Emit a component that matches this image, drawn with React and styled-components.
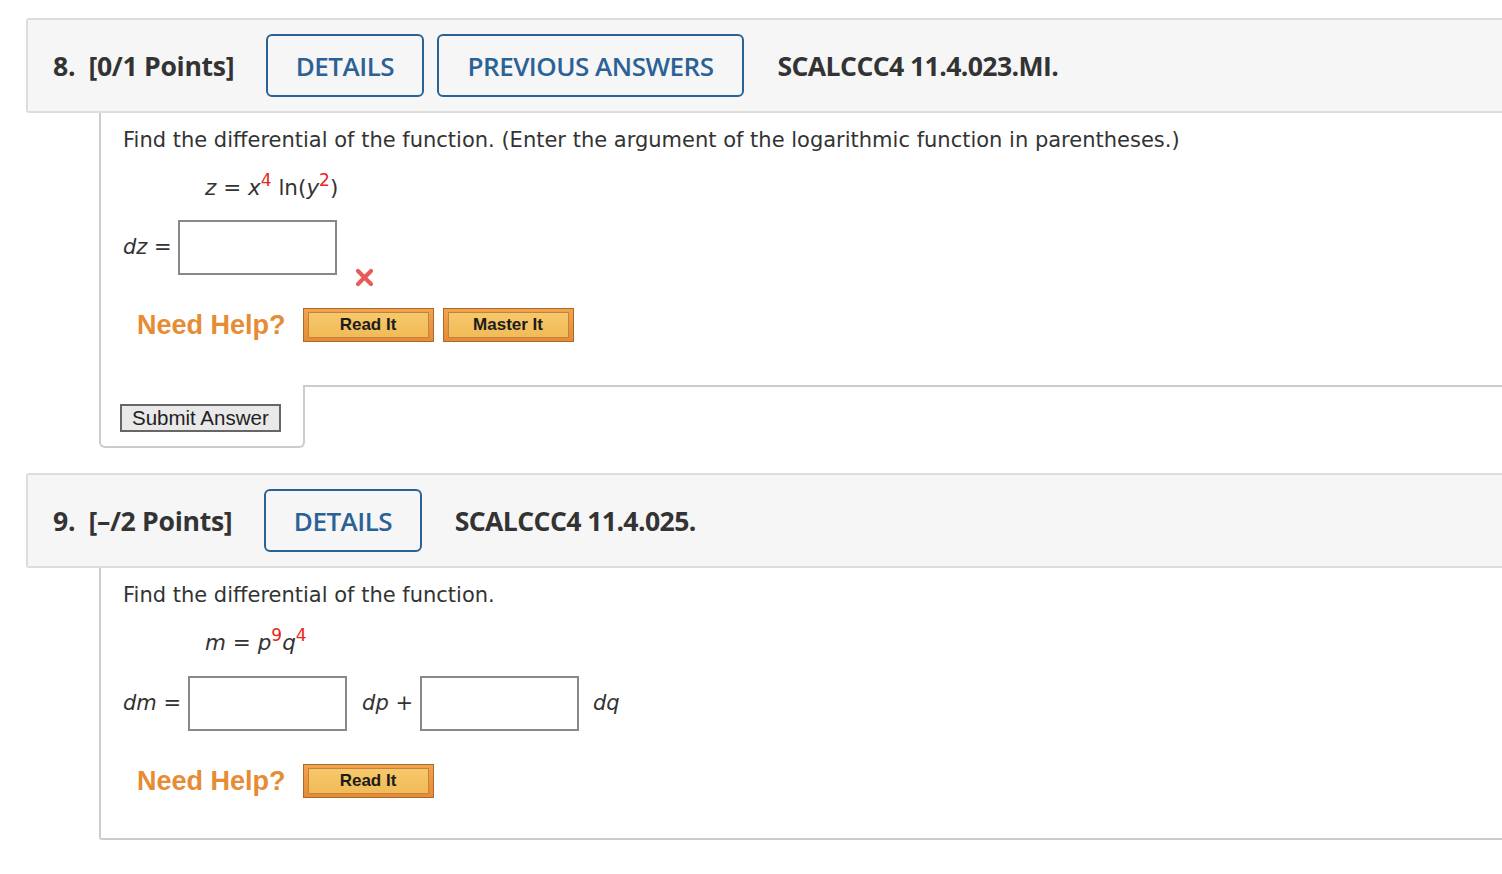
import React from "react";
import styled, { createGlobalStyle } from "styled-components";

const GlobalStyle = createGlobalStyle`
  html, body { margin: 0; padding: 0; background: #fff; overflow: hidden; }
  body { font-family: "DejaVu Sans", Verdana, sans-serif; color: #333; }
`;

const Page = styled.div`
  width: 1520px;
  padding: 18px 0 0 26px;
`;

const Question = styled.section`
  margin-bottom: 25px;
`;

const Header = styled.div`
  display: flex;
  align-items: center;
  height: 91px;
  background: #f6f6f6;
  border: 2px solid #dddddd;
  border-radius: 3px;
  padding-left: 25px;
  font-family: "Open Sans", sans-serif;
`;

const Title = styled.div`
  font-size: 26.6px;
  font-weight: 700;
  color: #333;
  letter-spacing: -0.3px;
  white-space: pre;
  margin-right: 32px;
`;

const ButtonGroup = styled.div`
  display: flex;
  gap: 13px;
  margin-right: 33px;
`;

const HeaderButton = styled.button`
  height: 63px;
  box-sizing: border-box;
  padding: 0 ${(p) => p.$pad || 27.5}px;
  border: 2px solid #2b6296;
  border-radius: 6px;
  background: transparent;
  color: #2b6296;
  font-family: "Open Sans", sans-serif;
  font-size: 26px;
  font-weight: 600;
  letter-spacing: -0.5px;
`;

const Ref = styled.div`
  font-size: 26.6px;
  font-weight: 700;
  color: #333;
  letter-spacing: -0.6px;
`;

const Body = styled.div`
  margin-left: 73px;
`;

const Content = styled.div`
  border-left: 2px solid #cccccc;
  padding: ${(p) => p.$top}px 0 ${(p) => p.$bottom || 0}px 22px;
  ${(p) => p.$closed && "border-bottom: 2px solid #cccccc; border-bottom-left-radius: 3px;"}
`;

const Prompt = styled.div`
  font-size: 21px;
  line-height: 24px;
  color: #333;
`;

const Equation = styled.div`
  margin: 24px 0 0 82px;
  font-size: 21.5px;
  line-height: 24px;
  color: #333;
`;

const Var = styled.i`
  font-style: italic;
`;

const Sup = styled.sup`
  color: #e8261c;
  font-size: 17px;
  vertical-align: 9px;
  line-height: 0;
`;

const AnswerRow = styled.div`
  display: flex;
  align-items: flex-start;
  height: 55px;
  margin-top: ${(p) => p.$top}px;
  font-size: 21px;
`;

const MathText = styled.span`
  line-height: 55px;
  white-space: pre;
  margin: 0 ${(p) => p.$right || 0}px 0 ${(p) => p.$left || 0}px;
`;

const AnswerBox = styled.div`
  width: 159px;
  height: 55px;
  box-sizing: border-box;
  border: 2px solid #888;
  background: #fff;
`;

const Wrong = styled.svg`
  flex: none;
  margin: 47px 0 0 17px;
`;

const HelpRow = styled.div`
  display: flex;
  align-items: center;
  margin-top: 33px;
  padding-left: 14px;
`;

const NeedHelp = styled.span`
  font-family: "Liberation Sans", Arial, sans-serif;
  font-weight: 700;
  font-size: 27px;
  color: #e58c34;
  margin-right: 17px;
`;

const HelpButton = styled.button`
  width: 131px;
  height: 34px;
  box-sizing: border-box;
  padding: 3px 4px;
  margin-right: 9px;
  border: 1px solid #a9692b;
  background: linear-gradient(#f2a34e, #e58c34);
  display: flex;
`;

const HelpInner = styled.span`
  flex: 1;
  display: flex;
  align-items: center;
  justify-content: center;
  border: 1px solid #c48240;
  background: linear-gradient(#f7c86a, #f1bb57);
  font-family: "Liberation Sans", Arial, sans-serif;
  font-weight: 700;
  font-size: 17px;
  color: #1c1c1c;
`;

const SubmitRow = styled.div`
  display: flex;
`;

const SubmitBox = styled.div`
  width: 206px;
  box-sizing: border-box;
  border: 2px solid #cccccc;
  border-top: none;
  border-radius: 0 0 6px 6px;
  padding: 19px 0 14px 19px;
`;

const Filler = styled.div`
  flex: 1;
  border-top: 2px solid #cccccc;
`;

const SubmitButton = styled.button`
  height: 28px;
  box-sizing: border-box;
  padding: 0 10px;
  border: 2px solid #666;
  background: #e9e9e9;
  font-family: "Liberation Sans", Arial, sans-serif;
  font-size: 20.5px;
  color: #222;
  line-height: 22px;
`;

function XMark() {
  return (
    <Wrong width="21" height="21" viewBox="0 0 21 21">
      <path d="M4 4 L17 17 M17 4 L4 17" stroke="#e85a5a" strokeWidth="4.2" strokeLinecap="round" />
    </Wrong>
  );
}

function Help({ master }) {
  return (
    <HelpRow>
      <NeedHelp>Need Help?</NeedHelp>
      <HelpButton>
        <HelpInner>Read It</HelpInner>
      </HelpButton>
      {master && (
        <HelpButton>
          <HelpInner>Master It</HelpInner>
        </HelpButton>
      )}
    </HelpRow>
  );
}

export default function App() {
  return (
    <>
      <GlobalStyle />
      <Page>
        <Question>
          <Header>
            <Title>{"8.  [0/1 Points]"}</Title>
            <ButtonGroup>
              <HeaderButton>DETAILS</HeaderButton>
              <HeaderButton $pad={29}>PREVIOUS ANSWERS</HeaderButton>
            </ButtonGroup>
            <Ref>SCALCCC4 11.4.023.MI.</Ref>
          </Header>
          <Body>
            <Content $top={15} $bottom={43}>
              <Prompt>
                Find the differential of the function. (Enter the argument of the logarithmic function in parentheses.)
              </Prompt>
              <Equation>
                <Var>z</Var> = <Var>x</Var>
                <Sup>4</Sup> ln(<Var>y</Var>
                <Sup>2</Sup>)
              </Equation>
              <AnswerRow $top={20}>
                <MathText $right={6}>
                  <Var>dz</Var> =
                </MathText>
                <AnswerBox />
                <XMark />
              </AnswerRow>
              <Help master />
            </Content>
            <SubmitRow>
              <SubmitBox>
                <SubmitButton>Submit Answer</SubmitButton>
              </SubmitBox>
              <Filler />
            </SubmitRow>
          </Body>
        </Question>
        <Question>
          <Header>
            <Title>{"9.  [–/2 Points]"}</Title>
            <ButtonGroup>
              <HeaderButton>DETAILS</HeaderButton>
            </ButtonGroup>
            <Ref>SCALCCC4 11.4.025.</Ref>
          </Header>
          <Body>
            <Content $top={15} $bottom={40} $closed>
              <Prompt>Find the differential of the function.</Prompt>
              <Equation>
                <Var>m</Var> = <Var>p</Var>
                <Sup>9</Sup>
                <Var>q</Var>
                <Sup>4</Sup>
              </Equation>
              <AnswerRow $top={21}>
                <MathText $right={7}>
                  <Var>dm</Var> =
                </MathText>
                <AnswerBox />
                <MathText $left={15} $right={7}>
                  <Var>dp</Var> +
                </MathText>
                <AnswerBox />
                <MathText $left={14}>
                  <Var>dq</Var>
                </MathText>
              </AnswerRow>
              <Help />
            </Content>
          </Body>
        </Question>
      </Page>
    </>
  );
}
